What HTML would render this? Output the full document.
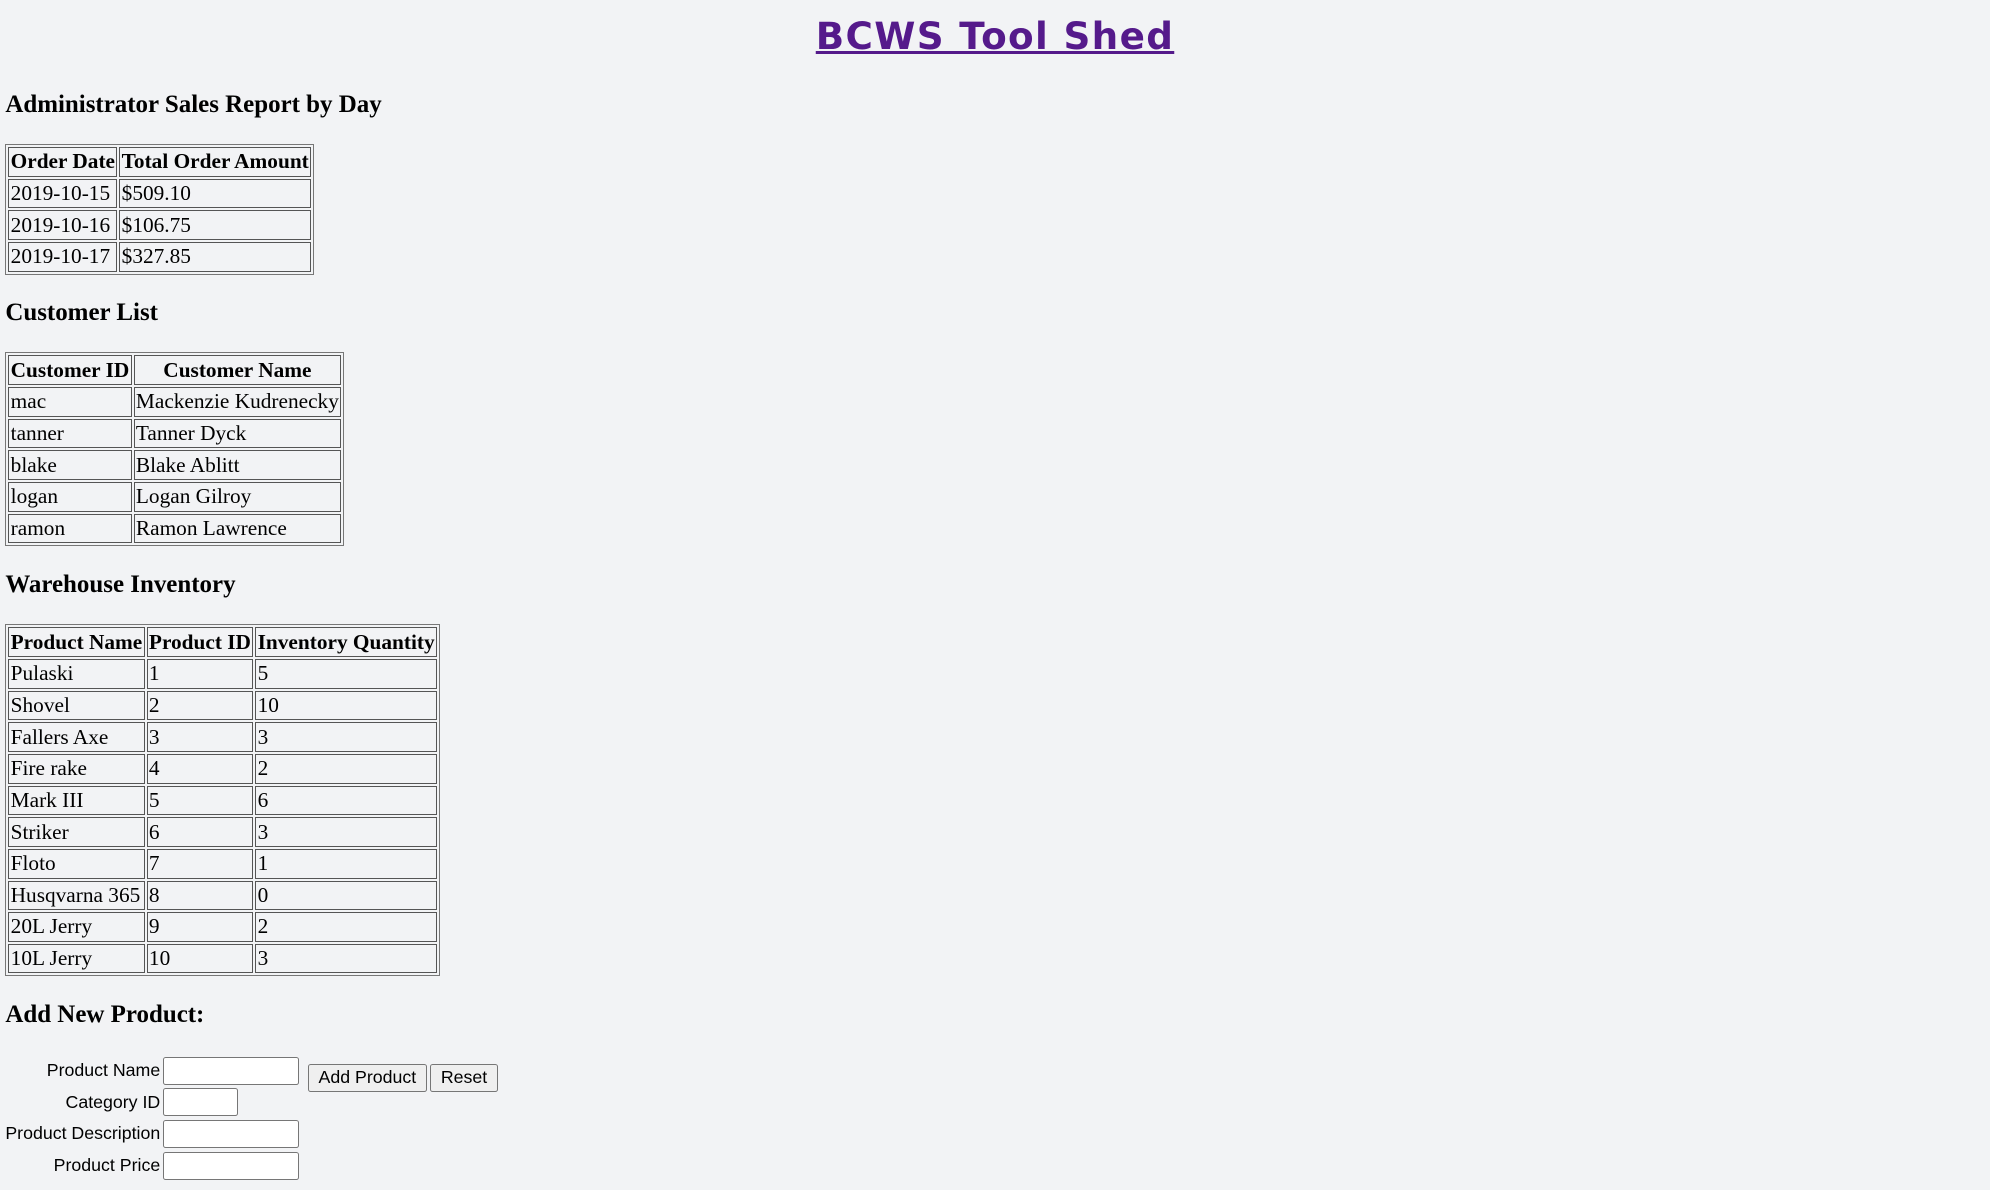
<!DOCTYPE html>
<html><head><meta charset="utf-8"><style>
html{zoom:1.333;background:#f2f3f5}
body{margin:4px;padding-top:1.5px;font-family:"Liberation Serif",serif;font-size:16px;color:#000;background:#f2f3f5}
h1{margin:0;text-align:center;font-family:"DejaVu Sans",sans-serif;font-size:28px;line-height:44px;font-weight:bold}
h1 a{color:#551a8b;text-decoration:underline;letter-spacing:1px}
h3{font-size:18.72px;margin:18.72px 0}
table.t{border:1px solid #777;border-spacing:2px}
table.t td,table.t th{border:1px solid #555;padding:1px}
th{font-weight:bold}
.f{font-family:"Liberation Sans",sans-serif;font-size:13.33px;display:flex;align-items:flex-start;margin-top:2px}
.f table{border-spacing:0 1px}
.f td{padding:1px 0}
.f td.l{text-align:right;padding:1px 2px 1px 0}
input{box-sizing:border-box;width:102px;height:21px;border:1px solid #767676;border-radius:2px;background:#fff;padding:1px 2px;margin:0;display:block}
input.s{width:56px}
button{box-sizing:border-box;font-family:"Liberation Sans",sans-serif;font-size:13.33px;background:#efefef;border:1px solid #767676;border-radius:2px;padding:0 7px;height:21px;margin-right:3px}
.b{margin-top:7px;margin-left:7px}
</style></head><body>
<h1><a>BCWS Tool Shed</a></h1>
<h3>Administrator Sales Report by Day</h3>
<table class="t">
<tr><th>Order Date</th><th>Total Order Amount</th></tr>
<tr><td>2019-10-15</td><td>$509.10</td></tr>
<tr><td>2019-10-16</td><td>$106.75</td></tr>
<tr><td>2019-10-17</td><td>$327.85</td></tr>
</table>
<h3>Customer List</h3>
<table class="t">
<tr><th>Customer ID</th><th>Customer Name</th></tr>
<tr><td>mac</td><td>Mackenzie Kudrenecky</td></tr>
<tr><td>tanner</td><td>Tanner Dyck</td></tr>
<tr><td>blake</td><td>Blake Ablitt</td></tr>
<tr><td>logan</td><td>Logan Gilroy</td></tr>
<tr><td>ramon</td><td>Ramon Lawrence</td></tr>
</table>
<h3>Warehouse Inventory</h3>
<table class="t">
<tr><th>Product Name</th><th>Product ID</th><th>Inventory Quantity</th></tr>
<tr><td>Pulaski</td><td>1</td><td>5</td></tr>
<tr><td>Shovel</td><td>2</td><td>10</td></tr>
<tr><td>Fallers Axe</td><td>3</td><td>3</td></tr>
<tr><td>Fire rake</td><td>4</td><td>2</td></tr>
<tr><td>Mark III</td><td>5</td><td>6</td></tr>
<tr><td>Striker</td><td>6</td><td>3</td></tr>
<tr><td>Floto</td><td>7</td><td>1</td></tr>
<tr><td>Husqvarna 365</td><td>8</td><td>0</td></tr>
<tr><td>20L Jerry</td><td>9</td><td>2</td></tr>
<tr><td>10L Jerry</td><td>10</td><td>3</td></tr>
</table>
<h3>Add New Product:</h3>
<div class="f">
<table>
<tr><td class="l">Product Name</td><td><input></td></tr>
<tr><td class="l">Category ID</td><td><input class="s"></td></tr>
<tr><td class="l">Product Description</td><td><input></td></tr>
<tr><td class="l">Product Price</td><td><input></td></tr>
</table>
<div class="b"><button>Add Product</button><button>Reset</button></div>
</div>
</body></html>
